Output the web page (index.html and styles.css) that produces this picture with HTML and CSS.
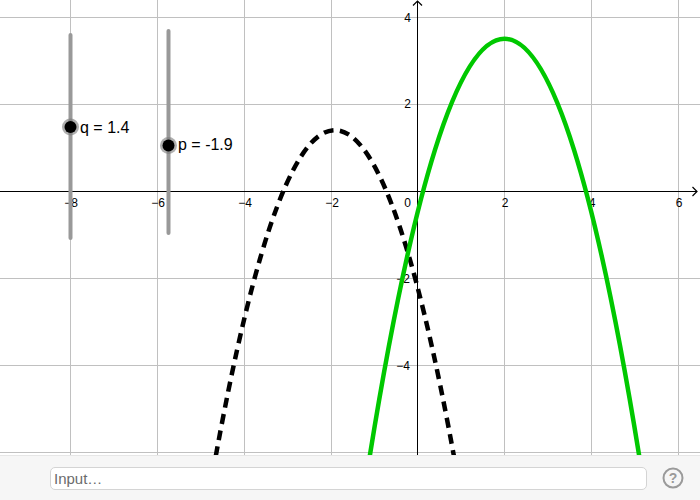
FILE: index.html
```html
<!DOCTYPE html>
<html>
<head>
<meta charset="utf-8">
<link rel="stylesheet" href="styles.css">
</head>
<body>
<div class="app">
  <div class="canvas">
    <svg class="graph" width="700" height="455" viewBox="0 0 700 455" xmlns="http://www.w3.org/2000/svg">
      <g class="grid">
        <line x1="70.5" y1="0" x2="70.5" y2="455"/>
        <line x1="157.5" y1="0" x2="157.5" y2="455"/>
        <line x1="244.5" y1="0" x2="244.5" y2="455"/>
        <line x1="331.5" y1="0" x2="331.5" y2="455"/>
        <line x1="504.5" y1="0" x2="504.5" y2="455"/>
        <line x1="591.5" y1="0" x2="591.5" y2="455"/>
        <line x1="678.5" y1="0" x2="678.5" y2="455"/>
        <line x1="0" y1="17.5" x2="700" y2="17.5"/>
        <line x1="0" y1="104.5" x2="700" y2="104.5"/>
        <line x1="0" y1="278.5" x2="700" y2="278.5"/>
        <line x1="0" y1="365.5" x2="700" y2="365.5"/>
        <line x1="0" y1="452.5" x2="700" y2="452.5"/>
      </g>
      <g class="axes">
        <line x1="0" y1="191.5" x2="697" y2="191.5"/>
        <line x1="417.5" y1="1" x2="417.5" y2="455"/>
        <polyline points="692.5,187 697,191.5 692.5,196"/>
        <polyline points="413,5.5 417.5,1 422,5.5"/>
      </g>
      <g class="ticks">
        <text x="71" y="207" text-anchor="middle">−8</text>
        <text x="158" y="207" text-anchor="middle">−6</text>
        <text x="245" y="207" text-anchor="middle">−4</text>
        <text x="332" y="207" text-anchor="middle">−2</text>
        <text x="411" y="207" text-anchor="end">0</text>
        <text x="505" y="207" text-anchor="middle">2</text>
        <text x="592" y="207" text-anchor="middle">4</text>
        <text x="679" y="207" text-anchor="middle">6</text>
        <text x="411" y="22" text-anchor="end">4</text>
        <text x="411" y="108" text-anchor="end">2</text>
        <text x="410" y="283" text-anchor="end">−2</text>
        <text x="410" y="370" text-anchor="end">−4</text>
      </g>
      <path class="curve-g" d="M204.35,521.6 Q334.85,-261.4 465.35,521.6"/>
      <path class="curve-f" d="M365.3,484.19 Q504.5,-406.69 643.7,484.19"/>
      <g class="slider">
        <line x1="70.5" y1="35" x2="70.5" y2="238"/>
        <line x1="168.5" y1="31" x2="168.5" y2="233"/>
      </g>
      <circle class="halo" cx="70.5" cy="127" r="8.5"/>
      <circle class="dot" cx="70.5" cy="127" r="6"/>
      <circle class="halo" cx="168.5" cy="145.5" r="8.5"/>
      <circle class="dot" cx="168.5" cy="145.5" r="6"/>
      <text class="label" x="80" y="132.5">q = 1.4</text>
      <text class="label" x="178" y="150">p = -1.9</text>
    </svg>
  </div>
  <div class="bar">
    <div class="input">Input…</div>
    <div class="help">
      <svg width="22" height="22" viewBox="0 0 22 22" xmlns="http://www.w3.org/2000/svg">
        <circle cx="11" cy="11" r="9.5" fill="none" stroke="#9a9a9a" stroke-width="2"/>
        <text x="11" y="15.5" text-anchor="middle" class="q">?</text>
      </svg>
    </div>
  </div>
</div>
</body>
</html>
```

FILE: styles.css
```css
html, body {
  margin: 0;
  padding: 0;
  background: #ffffff;
}
.app {
  width: 700px;
  height: 500px;
  display: flex;
  flex-direction: column;
  overflow: hidden;
  font-family: "Liberation Sans", Arial, sans-serif;
}
.canvas {
  height: 455px;
  flex: none;
  overflow: hidden;
  background: #ffffff;
}
.graph {
  display: block;
}
.grid line {
  stroke: #c0c0c0;
  stroke-width: 1;
}
.axes line {
  stroke: #000000;
  stroke-width: 1;
}
.axes polyline {
  fill: none;
  stroke: #000000;
  stroke-width: 1.2;
}
.ticks text {
  font-family: "Liberation Sans", Arial, sans-serif;
  font-size: 12px;
  fill: #000000;
}
.curve-f {
  fill: none;
  stroke: #00c800;
  stroke-width: 4.5;
}
.curve-g {
  fill: none;
  stroke: #000000;
  stroke-width: 4.5;
  stroke-dasharray: 10 6.5;
}
.slider line {
  stroke: #999999;
  stroke-width: 4;
  stroke-linecap: round;
}
.halo {
  fill: #7a7a7a;
  fill-opacity: 0.6;
}
.dot {
  fill: #000000;
}
.label {
  font-family: "Liberation Sans", Arial, sans-serif;
  font-size: 16px;
  fill: #000000;
}
.bar {
  height: 45px;
  flex: none;
  box-sizing: border-box;
  background: #f6f6f6;
  border-top: 1px solid #e6e6e6;
  display: flex;
  align-items: center;
  padding-left: 50px;
  gap: 15px;
}
.input {
  width: 597px;
  height: 23px;
  box-sizing: border-box;
  background: #ffffff;
  border: 1px solid #d4d4d4;
  border-radius: 5px;
  color: #6b6b6b;
  font-size: 15px;
  line-height: 21px;
  padding-left: 3px;
}
.help {
  width: 22px;
  height: 22px;
}
.help svg {
  display: block;
}
.help .q {
  font-family: "Liberation Sans", Arial, sans-serif;
  font-size: 14px;
  font-weight: bold;
  fill: #9a9a9a;
}
```
